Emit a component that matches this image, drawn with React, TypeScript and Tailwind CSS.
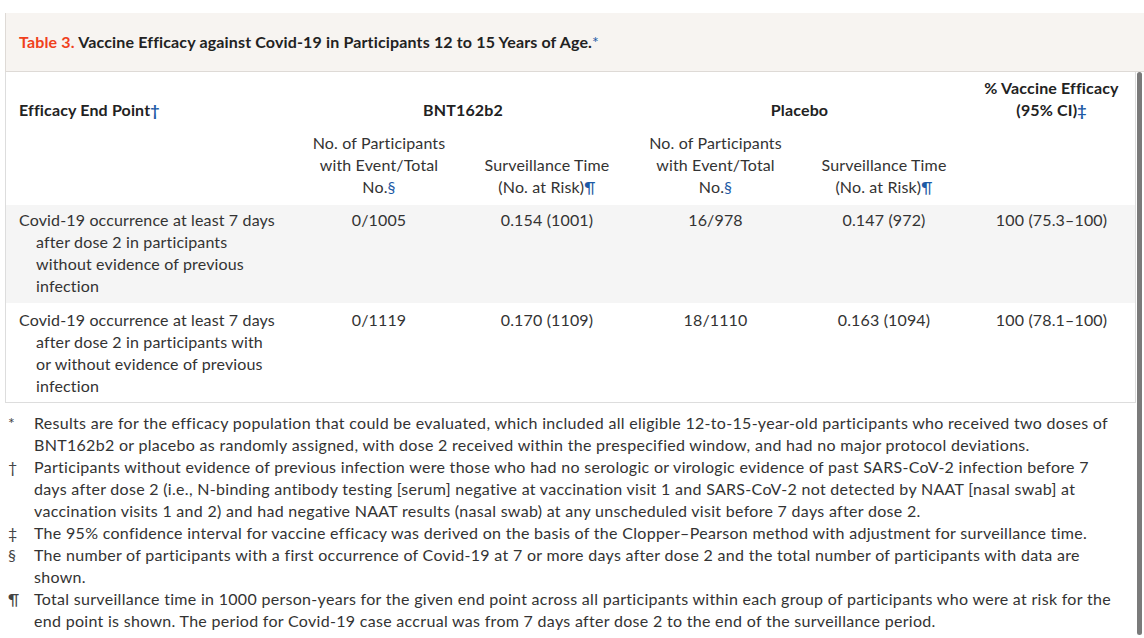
import React from "react";

const B = ({ children }: { children: React.ReactNode }) => (
  <span className="text-[#1d5aa5]">{children}</span>
);

const th2 = "align-bottom px-[10px] pt-[11px] pb-[7px] font-normal text-center";
const td = "align-top px-[10px] text-center";

const Lines = ({ lines }: { lines: string[] }) => (
  <>
    {lines.map((l, i) => (
      <span key={i} className={`block whitespace-nowrap ${i > 0 ? "pl-[17px]" : ""}`}>
        {l}
      </span>
    ))}
  </>
);

const notes: [string, string[]][] = [
  ["*", [
    "Results are for the efficacy population that could be evaluated, which included all eligible 12-to-15-year-old participants who received two doses of",
    "BNT162b2 or placebo as randomly assigned, with dose 2 received within the prespecified window, and had no major protocol deviations.",
  ]],
  ["†", [
    "Participants without evidence of previous infection were those who had no serologic or virologic evidence of past SARS-CoV-2 infection before 7",
    "days after dose 2 (i.e., N-binding antibody testing [serum] negative at vaccination visit 1 and SARS-CoV-2 not detected by NAAT [nasal swab] at",
    "vaccination visits 1 and 2) and had negative NAAT results (nasal swab) at any unscheduled visit before 7 days after dose 2.",
  ]],
  ["‡", [
    "The 95% confidence interval for vaccine efficacy was derived on the basis of the Clopper–Pearson method with adjustment for surveillance time.",
  ]],
  ["§", [
    "The number of participants with a first occurrence of Covid-19 at 7 or more days after dose 2 and the total number of participants with data are",
    "shown.",
  ]],
  ["¶", [
    "Total surveillance time in 1000 person-years for the given end point across all participants within each group of participants who were at risk for the",
    "end point is shown. The period for Covid-19 case accrual was from 7 days after dose 2 to the end of the surveillance period.",
  ]],
];

export default function App() {
  return (
    <div className="relative w-[1144px] h-[638px] overflow-hidden bg-white pt-[13px] pl-[5px] text-[16px] leading-[22px] text-[#333] [font-family:Lato,'Liberation_Sans',sans-serif]">
      <div className="h-[59px] flex items-center pl-[13px] bg-[#f7f4f1] border-l border-b border-[#dedad6]">
        <span className="font-bold text-[16px] tracking-[0.15px] text-[#222]">
          <span className="text-[#f0401c]">Table 3.</span> Vaccine Efficacy against Covid-19 in Participants 12 to 15 Years of Age.
          <span className="text-[#1d5aa5] font-normal">*</span>
        </span>
      </div>
      <div className="w-[1131px] border-l border-r border-b border-[#dddddd] tracking-[0.15px]">
        <table className="w-full table-fixed border-collapse">
          <colgroup>
            <col className="w-[289px]" />
            <col className="w-[168px]" />
            <col className="w-[168px]" />
            <col className="w-[169px]" />
            <col className="w-[168px]" />
            <col />
          </colgroup>
          <thead>
            <tr className="text-[#222]">
              <th className="align-bottom text-left pl-[13px] pt-[5px] font-bold">
                Efficacy End Point<B>†</B>
              </th>
              <th colSpan={2} className="align-bottom text-center font-bold">
                BNT162b2
              </th>
              <th colSpan={2} className="align-bottom text-center font-bold">
                Placebo
              </th>
              <th className="align-bottom text-center font-bold pt-[5px] px-[4px]">
                % Vaccine Efficacy
                <br />
                (95% CI)<B>‡</B>
              </th>
            </tr>
            <tr>
              <th className={th2}></th>
              <th className={th2}>
                No. of Participants
                <br />
                with Event/Total
                <br />
                No.<B>§</B>
              </th>
              <th className={th2}>
                Surveillance Time
                <br />
                (No. at Risk)<B>¶</B>
              </th>
              <th className={th2}>
                No. of Participants
                <br />
                with Event/Total
                <br />
                No.<B>§</B>
              </th>
              <th className={th2}>
                Surveillance Time
                <br />
                (No. at Risk)<B>¶</B>
              </th>
              <th className={th2}></th>
            </tr>
          </thead>
          <tbody>
            <tr className="bg-[#f5f5f5]">
              <td className="align-top text-left pl-[13px] pt-[4px] pb-[6px]">
                <Lines
                  lines={[
                    "Covid-19 occurrence at least 7 days",
                    "after dose 2 in participants",
                    "without evidence of previous",
                    "infection",
                  ]}
                />
              </td>
              <td className={`${td} pt-[4px]`}>0/1005</td>
              <td className={`${td} pt-[4px]`}>0.154 (1001)</td>
              <td className={`${td} pt-[4px]`}>16/978</td>
              <td className={`${td} pt-[4px]`}>0.147 (972)</td>
              <td className={`${td} pt-[4px]`}>100 (75.3–100)</td>
            </tr>
            <tr>
              <td className="align-top text-left pl-[13px] pt-[6px] pb-[5px]">
                <Lines
                  lines={[
                    "Covid-19 occurrence at least 7 days",
                    "after dose 2 in participants with",
                    "or without evidence of previous",
                    "infection",
                  ]}
                />
              </td>
              <td className={`${td} pt-[6px]`}>0/1119</td>
              <td className={`${td} pt-[6px]`}>0.170 (1109)</td>
              <td className={`${td} pt-[6px]`}>18/1110</td>
              <td className={`${td} pt-[6px]`}>0.163 (1094)</td>
              <td className={`${td} pt-[6px]`}>100 (78.1–100)</td>
            </tr>
          </tbody>
        </table>
      </div>
      <div className="mt-[9px] pl-[3px] w-[1130px] flex flex-col tracking-[0.3px]">
        {notes.map(([s, ls]) => (
          <div key={s} className="flex">
            <span className="w-[26px] shrink-0 text-[#444]">{s}</span>
            <div className="flex-1">
              {ls.map((l, i) => (
                <span key={i} className="block whitespace-nowrap">
                  {l}
                </span>
              ))}
            </div>
          </div>
        ))}
      </div>
      <div className="absolute left-[1137px] top-[72px] w-[5px] h-[563px] rounded-[3px] bg-[#7a7a7a]" />
    </div>
  );
}
